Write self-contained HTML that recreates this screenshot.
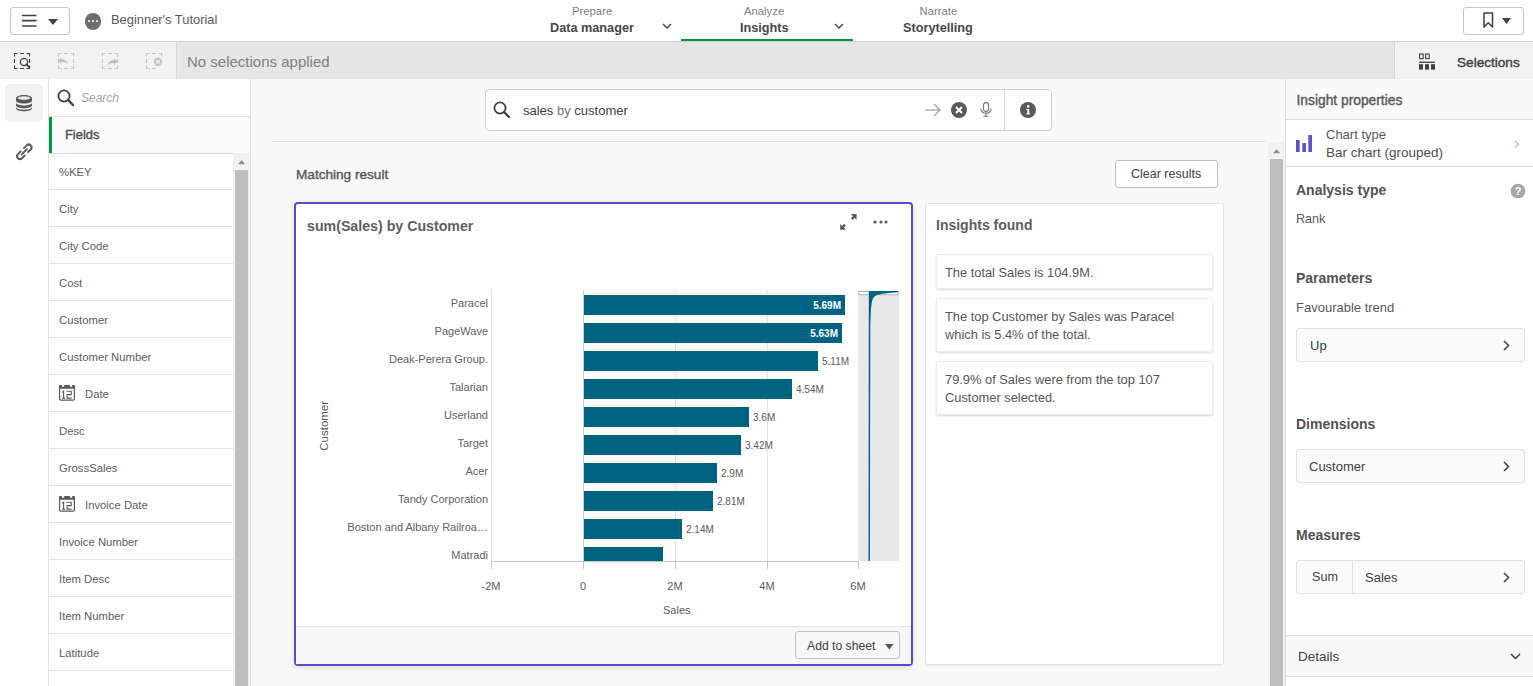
<!DOCTYPE html>
<html><head><meta charset="utf-8">
<style>
*{box-sizing:border-box;margin:0;padding:0}
html,body{width:1533px;height:686px;overflow:hidden;background:#fff;font-family:"Liberation Sans",sans-serif;color:#404040}
.a{position:absolute}
.t{position:absolute;white-space:nowrap;line-height:1}
svg{position:absolute;overflow:visible}
.fl{font-size:11.5px;color:#595959}
.b{font-weight:bold}
</style></head><body>
<div class="a" style="left:0px;top:0px;width:1533px;height:42px;background:#fff;border-bottom:1px solid #cfcfcf"></div>
<div class="a" style="left:10px;top:7px;width:60px;height:28px;border:1px solid #c4c4c4;border-radius:3px"></div>
<svg style="left:22px;top:13px" width="15" height="15"><path d="M0,2.5H14.5M0,7.7H14.5M0,13H14.5" stroke="#404040" stroke-width="1.7"/></svg>
<svg style="left:48px;top:19px" width="10" height="6"><path d="M0 0H10L5 6Z" fill="#404040"/></svg>
<div class="a" style="left:84.5px;top:13px;width:16.5px;height:16.5px;border-radius:50%;background:#6e6e6e"></div>
<div class="a" style="left:87.5px;top:19.8px;width:2.6px;height:2.6px;border-radius:50%;background:#fff"></div>
<div class="a" style="left:91.5px;top:19.8px;width:2.6px;height:2.6px;border-radius:50%;background:#fff"></div>
<div class="a" style="left:95.5px;top:19.8px;width:2.6px;height:2.6px;border-radius:50%;background:#fff"></div>
<div class="t" style="left:111px;top:14px;font-size:12.9px;color:#595959">Beginner's Tutorial</div>
<div class="t" style="left:572px;top:6px;font-size:11.3px;color:#808080">Prepare</div>
<div class="t" style="left:550px;top:22px;font-size:12.7px;font-weight:bold;color:#474747">Data manager</div>
<div class="t" style="left:744px;top:6px;font-size:11.3px;color:#808080">Analyze</div>
<div class="t" style="left:740px;top:22px;font-size:12.7px;font-weight:bold;color:#474747">Insights</div>
<div class="t" style="left:919.5px;top:6px;font-size:11.3px;color:#808080">Narrate</div>
<div class="t" style="left:903px;top:22px;font-size:12.7px;font-weight:bold;color:#474747">Storytelling</div>
<svg style="left:662px;top:22.5px" width="10" height="6"><path d="M1 1L5 5L9 1" fill="none" stroke="#404040" stroke-width="1.3"/></svg>
<svg style="left:834px;top:22.5px" width="10" height="6"><path d="M1 1L5 5L9 1" fill="none" stroke="#404040" stroke-width="1.3"/></svg>
<div class="a" style="left:681px;top:39px;width:172px;height:2px;background:#009845"></div>
<div class="a" style="left:1463px;top:7px;width:61px;height:28px;border:1px solid #c4c4c4;border-radius:3px"></div>
<svg style="left:1483px;top:12px" width="12" height="16"><path d="M1 1H9.5V15L5.25 10.8L1 15Z" fill="none" stroke="#404040" stroke-width="1.5" stroke-linejoin="round"/></svg>
<svg style="left:1502px;top:18px" width="10" height="6"><path d="M0 0H9L4.5 6Z" fill="#404040"/></svg>
<div class="a" style="left:0px;top:42px;width:176px;height:37px;background:#f2f2f2"></div>
<div class="a" style="left:176px;top:42px;width:1218px;height:37px;background:#e6e6e6;border-left:1px solid #d6d6d6"></div>
<div class="a" style="left:1394px;top:42px;width:139px;height:37px;background:#f2f2f2;border-left:1px solid #d6d6d6"></div>
<svg style="left:14px;top:53px" width="16" height="16"><path d="M0.5,3.5V0.5H3.5M6,0.5H10M12.5,0.5H15.5V3.5M0.5,6V10M0.5,12.5V15.5H3.5M6,15.5H10M15.5,6V10M12.5,15.5H15.5V12.5" fill="none" stroke="#404040" stroke-width="1.1"/></svg>
<svg style="left:58px;top:53px" width="16" height="16"><path d="M0.5,3.5V0.5H3.5M6,0.5H10M12.5,0.5H15.5V3.5M0.5,6V10M0.5,12.5V15.5H3.5M6,15.5H10M15.5,6V10M12.5,15.5H15.5V12.5" fill="none" stroke="#c4c4c4" stroke-width="1.1"/></svg>
<svg style="left:102px;top:53px" width="16" height="16"><path d="M0.5,3.5V0.5H3.5M6,0.5H10M12.5,0.5H15.5V3.5M0.5,6V10M0.5,12.5V15.5H3.5M6,15.5H10M15.5,6V10M12.5,15.5H15.5V12.5" fill="none" stroke="#c4c4c4" stroke-width="1.1"/></svg>
<svg style="left:146px;top:53px" width="16" height="16"><path d="M0.5,3.5V0.5H3.5M6,0.5H10M12.5,0.5H15.5V3.5M0.5,6V10M0.5,12.5V15.5H3.5M6,15.5H10" fill="none" stroke="#c4c4c4" stroke-width="1.1"/></svg>
<svg style="left:14px;top:53px" width="18" height="18"><circle cx="10" cy="8.9" r="3.6" fill="none" stroke="#404040" stroke-width="1.3"/><path d="M12.6 11.5L15.5 14.4" stroke="#404040" stroke-width="1.8" stroke-linecap="round"/></svg>
<svg style="left:58px;top:57px" width="12" height="9"><path d="M0,3.6 L3.4,0.5 V2.3 C6.5,2.3 9.2,3.8 10.2,7.4 C8.8,5.8 6.6,5 3.4,5 V6.9 Z" fill="#c0c0c0"/></svg>
<svg style="left:106px;top:58px" width="12" height="9"><path d="M11.5,3.6 L8.1,0.5 V2.3 C5,2.3 2.3,3.8 1.3,7.4 C2.7,5.8 4.9,5 8.1,5 V6.9 Z" fill="#c0c0c0"/></svg>
<svg style="left:153px;top:57px" width="10" height="10"><circle cx="5" cy="4.8" r="4.2" fill="#c4c4c4"/><path d="M3.2 3L6.8 6.6M6.8 3L3.2 6.6" stroke="#f2f2f2" stroke-width="1.3"/></svg>
<div class="t" style="left:187px;top:54px;font-size:15px;color:#808080">No selections applied</div>
<svg style="left:1419px;top:53px" width="17" height="17"><rect x="0.6" y="1" width="3.6" height="4.6" fill="none" stroke="#404040" stroke-width="1.1"/><rect x="6.6" y="1" width="3.6" height="4.6" fill="none" stroke="#404040" stroke-width="1.1"/><rect x="0" y="8.6" width="16" height="1.3" fill="#404040"/><rect x="0" y="11.2" width="4" height="5.4" fill="#404040"/><rect x="6" y="11.2" width="4" height="5.4" fill="#404040"/><rect x="12" y="11.2" width="4" height="5.4" fill="#404040"/></svg>
<div class="t" style="left:1457px;top:56px;font-size:13.6px;color:#404040;-webkit-text-stroke:0.4px #404040">Selections</div>
<div class="a" style="left:0px;top:79px;width:49px;height:607px;background:#fff;border-right:1px solid #e3e3e3"></div>
<div class="a" style="left:5px;top:84px;width:38px;height:38px;background:#f2f2f2;border-radius:5px"></div>
<svg style="left:16px;top:95px" width="17" height="17"><g fill="#595959">
<path d="M0,3.2 C0,1.4 3.6,0 8,0 S16,1.4 16,3.2 V5.6 C16,7.4 12.4,8.6 8,8.6 S0,7.4 0,5.6 Z"/>
<path d="M0,8.2 C0.8,9.6 4,10.4 8,10.4 S15.2,9.6 16,8.2 V10.2 C16,12 12.4,13.2 8,13.2 S0,12 0,10.2 Z"/>
<path d="M0,12.6 C0.8,14 4,14.8 8,14.8 S15.2,14 16,12.6 V13.2 C16,15 12.4,16.2 8,16.2 S0,15 0,13.2 Z"/>
</g><ellipse cx="8" cy="3" rx="6.2" ry="1.7" fill="#e8e8e8"/></svg>
<svg style="left:12px;top:139px" width="24" height="24"><g transform="translate(12.3,12.8) rotate(45) scale(0.86)" fill="none" stroke="#595959" stroke-width="2.3" stroke-linecap="round">
<path d="M-3.3,-2.8 V-7.2 A3.3,3.3 0 0 1 3.3,-7.2 V-2.8"/>
<path d="M-3.3,2.8 V7.2 A3.3,3.3 0 0 0 3.3,7.2 V2.8"/>
<path d="M0,-4.2 V4.2"/></g></svg>
<div class="a" style="left:49px;top:79px;width:202px;height:607px;background:#fff;border-right:1px solid #e0e0e0"></div>
<div class="a" style="left:49px;top:116px;width:201px;height:1px;background:#e3e3e3"></div>
<svg style="left:57px;top:89px" width="18" height="18"><circle cx="7" cy="7" r="5.6" fill="none" stroke="#404040" stroke-width="1.8"/><path d="M11 11L16 16" stroke="#404040" stroke-width="2.4" stroke-linecap="round"/></svg>
<div class="t" style="left:81px;top:92px;font-size:12px;font-style:italic;color:#a3a3a3">Search</div>
<div class="a" style="left:49px;top:117px;width:201px;height:37px;background:#fafafa;border-bottom:1px solid #d9d9d9"></div>
<div class="a" style="left:49px;top:117px;width:3px;height:36px;background:#009845"></div>
<div class="t" style="left:65px;top:128.5px;font-size:12.9px;color:#505050;-webkit-text-stroke:0.4px #505050">Fields</div>
<div class="a" style="left:49px;top:153px;width:184px;height:37px;border-bottom:1px solid #e6e6e6"></div>
<div class="t" style="left:59px;top:167px;font-size:11.3px;color:#5c5c5c">%KEY</div>
<div class="a" style="left:49px;top:190px;width:184px;height:37px;border-bottom:1px solid #e6e6e6"></div>
<div class="t" style="left:59px;top:204px;font-size:11.3px;color:#5c5c5c">City</div>
<div class="a" style="left:49px;top:227px;width:184px;height:37px;border-bottom:1px solid #e6e6e6"></div>
<div class="t" style="left:59px;top:241px;font-size:11.3px;color:#5c5c5c">City Code</div>
<div class="a" style="left:49px;top:264px;width:184px;height:37px;border-bottom:1px solid #e6e6e6"></div>
<div class="t" style="left:59px;top:278px;font-size:11.3px;color:#5c5c5c">Cost</div>
<div class="a" style="left:49px;top:301px;width:184px;height:37px;border-bottom:1px solid #e6e6e6"></div>
<div class="t" style="left:59px;top:315px;font-size:11.3px;color:#5c5c5c">Customer</div>
<div class="a" style="left:49px;top:338px;width:184px;height:37px;border-bottom:1px solid #e6e6e6"></div>
<div class="t" style="left:59px;top:352px;font-size:11.3px;color:#5c5c5c">Customer Number</div>
<div class="a" style="left:49px;top:375px;width:184px;height:37px;border-bottom:1px solid #e6e6e6"></div>
<svg style="left:59px;top:385px" width="17" height="17"><path d="M0.6,3 V14 Q0.6,15.2 1.8,15.2 H14.2 Q15.4,15.2 15.4,14 V3" fill="none" stroke="#595959" stroke-width="1.2"/><path d="M1,0 H2.9 V1.8 H5.2 V0 H10.9 V1.8 H13.2 V0 H15 Q16,0 16,1 V3.7 H0 V1 Q0,0 1,0 Z" fill="#595959"/><path d="M3.2,7.2 L4.6,6.3 V13.1 M3.1,13.1 H6 M7.5,6.3 H12.2 V9.6 H8.1 V13.1 H12.6" fill="none" stroke="#595959" stroke-width="1.1"/></svg>
<div class="t" style="left:85px;top:389px;font-size:11.3px;color:#5c5c5c">Date</div>
<div class="a" style="left:49px;top:412px;width:184px;height:37px;border-bottom:1px solid #e6e6e6"></div>
<div class="t" style="left:59px;top:426px;font-size:11.3px;color:#5c5c5c">Desc</div>
<div class="a" style="left:49px;top:449px;width:184px;height:37px;border-bottom:1px solid #e6e6e6"></div>
<div class="t" style="left:59px;top:463px;font-size:11.3px;color:#5c5c5c">GrossSales</div>
<div class="a" style="left:49px;top:486px;width:184px;height:37px;border-bottom:1px solid #e6e6e6"></div>
<svg style="left:59px;top:496px" width="17" height="17"><path d="M0.6,3 V14 Q0.6,15.2 1.8,15.2 H14.2 Q15.4,15.2 15.4,14 V3" fill="none" stroke="#595959" stroke-width="1.2"/><path d="M1,0 H2.9 V1.8 H5.2 V0 H10.9 V1.8 H13.2 V0 H15 Q16,0 16,1 V3.7 H0 V1 Q0,0 1,0 Z" fill="#595959"/><path d="M3.2,7.2 L4.6,6.3 V13.1 M3.1,13.1 H6 M7.5,6.3 H12.2 V9.6 H8.1 V13.1 H12.6" fill="none" stroke="#595959" stroke-width="1.1"/></svg>
<div class="t" style="left:85px;top:500px;font-size:11.3px;color:#5c5c5c">Invoice Date</div>
<div class="a" style="left:49px;top:523px;width:184px;height:37px;border-bottom:1px solid #e6e6e6"></div>
<div class="t" style="left:59px;top:537px;font-size:11.3px;color:#5c5c5c">Invoice Number</div>
<div class="a" style="left:49px;top:560px;width:184px;height:37px;border-bottom:1px solid #e6e6e6"></div>
<div class="t" style="left:59px;top:574px;font-size:11.3px;color:#5c5c5c">Item Desc</div>
<div class="a" style="left:49px;top:597px;width:184px;height:37px;border-bottom:1px solid #e6e6e6"></div>
<div class="t" style="left:59px;top:611px;font-size:11.3px;color:#5c5c5c">Item Number</div>
<div class="a" style="left:49px;top:634px;width:184px;height:37px;border-bottom:1px solid #e6e6e6"></div>
<div class="t" style="left:59px;top:648px;font-size:11.3px;color:#5c5c5c">Latitude</div>
<div class="a" style="left:49px;top:671px;width:184px;height:37px;border-bottom:1px solid #e6e6e6"></div>
<div class="t" style="left:59px;top:685px;font-size:11.3px;color:#5c5c5c">Longitude</div>
<div class="a" style="left:233px;top:153px;width:17px;height:533px;background:#f2f2f2"></div>
<svg style="left:238px;top:160px" width="8" height="5"><path d="M0 4.3L3.6 0L7.2 4.3Z" fill="#8f8f8f"/></svg>
<div class="a" style="left:235px;top:170px;width:13px;height:516px;background:#bdbdbd"></div>
<div class="a" style="left:251px;top:79px;width:1035px;height:607px;background:#f9f9f9"></div>
<div class="a" style="left:485px;top:89px;width:567px;height:42px;background:#fff;border:1px solid #cfcfcf;border-radius:4px"></div>
<div class="a" style="left:1004px;top:90px;width:1px;height:40px;background:#d9d9d9"></div>
<svg style="left:493px;top:101px" width="18" height="18"><circle cx="7" cy="7" r="5.6" fill="none" stroke="#404040" stroke-width="1.8"/><path d="M11 11L16 16" stroke="#404040" stroke-width="2.4" stroke-linecap="round"/></svg>
<div class="t" style="left:523px;top:104px;font-size:13px;color:#404040">sales <span style="color:#737373">by</span> customer</div>
<svg style="left:924px;top:102px" width="18" height="16"><path d="M1 8H16M10 2L16 8L10 14" fill="none" stroke="#b0b0b0" stroke-width="1.5"/></svg>
<svg style="left:951px;top:102px" width="16" height="16"><circle cx="8" cy="8" r="8" fill="#595959"/><path d="M5 5L11 11M11 5L5 11" stroke="#fff" stroke-width="2"/></svg>
<svg style="left:980px;top:102px" width="12" height="15"><rect x="3.5" y="0.6" width="5" height="9" rx="2.5" fill="none" stroke="#737373" stroke-width="1.1"/><path d="M1 6.5C1 9.5 3 11.2 6 11.2S11 9.5 11 6.5M6 11.2V14.2M3.5 14.3H8.5" fill="none" stroke="#737373" stroke-width="1.1"/></svg>
<svg style="left:1020px;top:102px" width="16" height="16"><circle cx="8" cy="8" r="8" fill="#595959"/><circle cx="8.2" cy="4.4" r="1.3" fill="#fff"/><path d="M6.3 7H9.2V11.6H10.2V12.6H6.3V11.6H7.3V8H6.3Z" fill="#fff"/></svg>
<div class="a" style="left:271px;top:141px;width:994px;height:1px;background:#e0e0e0"></div>
<div class="a" style="left:1268px;top:142px;width:17px;height:544px;background:#f2f2f2"></div>
<svg style="left:1273px;top:149px" width="8" height="5"><path d="M0 4.3L3.6 0L7.2 4.3Z" fill="#8f8f8f"/></svg>
<div class="a" style="left:1270px;top:159px;width:13px;height:527px;background:#bdbdbd"></div>
<div class="t" style="left:296px;top:167.5px;font-size:13.6px;color:#595959;-webkit-text-stroke:0.4px #595959">Matching result</div>
<div class="a" style="left:1115px;top:160px;width:103px;height:28px;background:#fff;border:1px solid #bfbfbf;border-radius:3px"></div>
<div class="t" style="left:1131px;top:168px;font-size:12.5px;color:#404040">Clear results</div>
<div class="a" style="left:294px;top:202px;width:619px;height:464px;background:#fff;border:2px solid #574cc6;border-radius:4px;box-shadow:0 2px 6px rgba(0,0,0,0.12)"></div>
<div class="a" style="left:296px;top:626px;width:615px;height:38px;background:#f7f7f7;border-top:1px solid #e3e3e3"></div>
<div class="a" style="left:795px;top:631px;width:105px;height:28px;background:#f7f7f7;border:1px solid #bfbfbf;border-radius:3px"></div>
<div class="t" style="left:807px;top:640px;font-size:12.2px;color:#404040">Add to sheet</div>
<svg style="left:885px;top:643.5px" width="9" height="6"><path d="M0 0H8.5L4.25 5.5Z" fill="#595959"/></svg>
<div class="t" style="left:307px;top:219px;font-size:14.2px;font-weight:bold;color:#5e5e5e">sum(Sales) by Customer</div>
<svg style="left:834px;top:208px" width="30" height="28"><g fill="#595959"><path d="M16.8,6 H22.6 V11.8 L20.7,9.9 L18.6,12 L16.9,10.3 L19,8.2 Z"/><path d="M12,21.8 H6.2 V16 L8.1,17.9 L10.2,15.8 L11.9,17.5 L9.8,19.6 Z"/></g></svg>
<svg style="left:873px;top:220px" width="4" height="4"><circle cx="2" cy="2" r="1.6" fill="#595959"/></svg>
<svg style="left:878.5px;top:220px" width="4" height="4"><circle cx="2" cy="2" r="1.6" fill="#595959"/></svg>
<svg style="left:884px;top:220px" width="4" height="4"><circle cx="2" cy="2" r="1.6" fill="#595959"/></svg>
<div class="t" style="left:302px;top:422px;font-size:11.5px;color:#595959;transform:rotate(-90deg);transform-origin:center;width:46px;text-align:center">Customer</div>
<div class="a" style="left:491px;top:290px;width:1px;height:271px;background:#e3e3e3"></div>
<div class="a" style="left:675px;top:290px;width:1px;height:271px;background:#e3e3e3"></div>
<div class="a" style="left:767px;top:290px;width:1px;height:271px;background:#e3e3e3"></div>
<div class="a" style="left:858px;top:290px;width:1px;height:271px;background:#e3e3e3"></div>
<div class="a" style="left:583px;top:290px;width:1px;height:271px;background:#cfcfcf"></div>
<div class="a" style="left:491px;top:561px;width:368px;height:1px;background:#c4c4c4"></div>
<div class="a" style="left:491px;top:561px;width:1px;height:8px;background:#c4c4c4"></div>
<div class="a" style="left:583px;top:561px;width:1px;height:8px;background:#c4c4c4"></div>
<div class="a" style="left:675px;top:561px;width:1px;height:8px;background:#c4c4c4"></div>
<div class="a" style="left:767px;top:561px;width:1px;height:8px;background:#c4c4c4"></div>
<div class="a" style="left:858px;top:561px;width:1px;height:8px;background:#c4c4c4"></div>
<div class="t" style="left:461px;top:581px;width:60px;text-align:center;font-size:11px;color:#595959">-2M</div>
<div class="t" style="left:553px;top:581px;width:60px;text-align:center;font-size:11px;color:#595959">0</div>
<div class="t" style="left:645px;top:581px;width:60px;text-align:center;font-size:11px;color:#595959">2M</div>
<div class="t" style="left:737px;top:581px;width:60px;text-align:center;font-size:11px;color:#595959">4M</div>
<div class="t" style="left:828px;top:581px;width:60px;text-align:center;font-size:11px;color:#595959">6M</div>
<div class="t" style="left:663px;top:605px;font-size:11px;color:#595959">Sales</div>
<div class="a" style="left:584px;top:295px;width:261px;height:20px;background:#006381"></div>
<div class="t" style="left:288px;top:298px;width:200px;text-align:right;font-size:11px;color:#616161">Paracel</div>
<div class="t" style="left:641px;top:301px;width:200px;text-align:right;font-size:10px;font-weight:bold;color:#fff">5.69M</div>
<div class="a" style="left:584px;top:323px;width:258px;height:20px;background:#006381"></div>
<div class="t" style="left:288px;top:326px;width:200px;text-align:right;font-size:11px;color:#616161">PageWave</div>
<div class="t" style="left:638px;top:329px;width:200px;text-align:right;font-size:10px;font-weight:bold;color:#fff">5.63M</div>
<div class="a" style="left:584px;top:351px;width:234px;height:20px;background:#006381"></div>
<div class="t" style="left:288px;top:354px;width:200px;text-align:right;font-size:11px;color:#616161">Deak-Perera Group.</div>
<div class="t" style="left:822px;top:357px;font-size:10px;color:#595959">5.11M</div>
<div class="a" style="left:584px;top:379px;width:208px;height:20px;background:#006381"></div>
<div class="t" style="left:288px;top:382px;width:200px;text-align:right;font-size:11px;color:#616161">Talarian</div>
<div class="t" style="left:796px;top:385px;font-size:10px;color:#595959">4.54M</div>
<div class="a" style="left:584px;top:407px;width:165px;height:20px;background:#006381"></div>
<div class="t" style="left:288px;top:410px;width:200px;text-align:right;font-size:11px;color:#616161">Userland</div>
<div class="t" style="left:753px;top:413px;font-size:10px;color:#595959">3.6M</div>
<div class="a" style="left:584px;top:435px;width:157px;height:20px;background:#006381"></div>
<div class="t" style="left:288px;top:438px;width:200px;text-align:right;font-size:11px;color:#616161">Target</div>
<div class="t" style="left:745px;top:441px;font-size:10px;color:#595959">3.42M</div>
<div class="a" style="left:584px;top:463px;width:133px;height:20px;background:#006381"></div>
<div class="t" style="left:288px;top:466px;width:200px;text-align:right;font-size:11px;color:#616161">Acer</div>
<div class="t" style="left:721px;top:469px;font-size:10px;color:#595959">2.9M</div>
<div class="a" style="left:584px;top:491px;width:129px;height:20px;background:#006381"></div>
<div class="t" style="left:288px;top:494px;width:200px;text-align:right;font-size:11px;color:#616161">Tandy Corporation</div>
<div class="t" style="left:717px;top:497px;font-size:10px;color:#595959">2.81M</div>
<div class="a" style="left:584px;top:519px;width:98px;height:20px;background:#006381"></div>
<div class="t" style="left:288px;top:522px;width:200px;text-align:right;font-size:11px;color:#616161">Boston and Albany Railroa…</div>
<div class="t" style="left:686px;top:525px;font-size:10px;color:#595959">2.14M</div>
<div class="a" style="left:584px;top:547px;width:79px;height:14px;background:#006381"></div>
<div class="t" style="left:288px;top:550px;width:200px;text-align:right;font-size:11px;color:#616161">Matradi</div>
<div class="a" style="left:858px;top:291px;width:41px;height:270px;background:#e8e8e8"></div>
<svg style="left:858px;top:291px" width="41" height="270"><rect x="0.8" y="0.5" width="39.4" height="3.2" fill="#fff" stroke="#b5b5b5" stroke-width="1"/><path d="M10.8,0 H40 V1.3 C32,2 22,2.4 17,5 C13.6,7.5 12.7,14 12.3,40 L11.9,270 H10.5 Z" fill="#006381"/></svg>
<div class="a" style="left:925px;top:203px;width:299px;height:462px;background:#fff;border:1px solid #e3e3e3;border-radius:3px;box-shadow:0 1px 2px rgba(0,0,0,0.06)"></div>
<div class="t" style="left:936px;top:218px;font-size:14px;font-weight:bold;color:#5e5e5e">Insights found</div>
<div class="a" style="left:936px;top:254px;width:277px;height:35px;background:#fff;border:1px solid #ebebeb;border-radius:2px;box-shadow:0 1px 2px rgba(0,0,0,0.15)"></div>
<div class="t" style="left:945px;top:267px;font-size:12.85px;color:#555555">The total Sales is 104.9M.</div>
<div class="a" style="left:936px;top:298px;width:277px;height:54px;background:#fff;border:1px solid #ebebeb;border-radius:2px;box-shadow:0 1px 2px rgba(0,0,0,0.15)"></div>
<div class="t" style="left:945px;top:311px;font-size:12.85px;color:#555555">The top Customer by Sales was Paracel</div>
<div class="t" style="left:945px;top:329px;font-size:12.85px;color:#555555">which is 5.4% of the total.</div>
<div class="a" style="left:936px;top:361px;width:277px;height:54px;background:#fff;border:1px solid #ebebeb;border-radius:2px;box-shadow:0 1px 2px rgba(0,0,0,0.15)"></div>
<div class="t" style="left:945px;top:374px;font-size:12.85px;color:#555555">79.9% of Sales were from the top 107</div>
<div class="t" style="left:945px;top:392px;font-size:12.85px;color:#555555">Customer selected.</div>
<div class="a" style="left:1285px;top:79px;width:248px;height:607px;background:#fff;border-left:1px solid #dcdcdc"></div>
<div class="a" style="left:1286px;top:79px;width:247px;height:41px;background:#f9f9f9;border-bottom:1px solid #dcdcdc"></div>
<div class="t" style="left:1296.5px;top:93.5px;font-size:13.8px;color:#5a5a5a;-webkit-text-stroke:0.4px #5a5a5a">Insight properties</div>
<div class="a" style="left:1286px;top:120px;width:247px;height:47px;background:#fff;border-bottom:1px solid #dcdcdc"></div>
<svg style="left:1296px;top:135px" width="17" height="18"><g fill="#5b54c6"><rect x="0" y="5" width="3.7" height="12" rx="0.5"/><rect x="6.3" y="8" width="3.7" height="9" rx="0.5"/><rect x="12.3" y="0" width="3.7" height="17" rx="0.5"/></g></svg>
<div class="t" style="left:1326px;top:128px;font-size:13px;color:#595959">Chart type</div>
<div class="t" style="left:1326px;top:146px;font-size:13.5px;color:#4d4d4d">Bar chart (grouped)</div>
<svg style="left:1514px;top:140px" width="7" height="9"><path d="M1 1L4.5 4.3L1 7.6" fill="none" stroke="#b3b3e6" stroke-width="1.2"/></svg>
<div class="t" style="left:1296px;top:183px;font-size:14px;font-weight:bold;color:#525252">Analysis type</div>
<svg style="left:1510px;top:183px" width="16" height="16"><circle cx="8" cy="8" r="7.3" fill="#a6a6a6"/><text x="8" y="12.2" font-size="11" font-weight="bold" text-anchor="middle" fill="#fff" font-family="Liberation Sans">?</text></svg>
<div class="t" style="left:1296px;top:213px;font-size:12.6px;color:#595959">Rank</div>
<div class="t" style="left:1296px;top:271px;font-size:14px;font-weight:bold;color:#525252">Parameters</div>
<div class="t" style="left:1296px;top:301px;font-size:13px;color:#595959">Favourable trend</div>
<div class="a" style="left:1296px;top:328px;width:229px;height:34px;background:#fafafa;border:1px solid #e0e0e0;border-radius:3px"></div>
<div class="t" style="left:1310px;top:339px;font-size:13px;color:#404040">Up</div>
<svg style="left:1503px;top:340px" width="7" height="11"><path d="M1 1L5.5 5.5L1 10" fill="none" stroke="#404040" stroke-width="1.5"/></svg>
<div class="t" style="left:1296px;top:417px;font-size:14px;font-weight:bold;color:#525252">Dimensions</div>
<div class="a" style="left:1296px;top:449px;width:229px;height:34px;background:#fafafa;border:1px solid #e0e0e0;border-radius:3px"></div>
<div class="t" style="left:1309px;top:460px;font-size:13px;color:#404040">Customer</div>
<svg style="left:1503px;top:461px" width="7" height="11"><path d="M1 1L5.5 5.5L1 10" fill="none" stroke="#404040" stroke-width="1.5"/></svg>
<div class="t" style="left:1296px;top:528px;font-size:14px;font-weight:bold;color:#525252">Measures</div>
<div class="a" style="left:1296px;top:560px;width:229px;height:34px;background:#fafafa;border:1px solid #e0e0e0;border-radius:3px"></div>
<div class="a" style="left:1352px;top:561px;width:1px;height:32px;background:#e0e0e0"></div>
<div class="t" style="left:1312px;top:571px;font-size:12.6px;color:#404040">Sum</div>
<div class="t" style="left:1365px;top:571px;font-size:13px;color:#404040">Sales</div>
<svg style="left:1503px;top:572px" width="7" height="11"><path d="M1 1L5.5 5.5L1 10" fill="none" stroke="#404040" stroke-width="1.5"/></svg>
<div class="a" style="left:1286px;top:635px;width:247px;height:42px;background:#f9f9f9;border-top:1px solid #dcdcdc;border-bottom:1px solid #dcdcdc"></div>
<div class="t" style="left:1298px;top:650px;font-size:13.5px;color:#404040">Details</div>
<svg style="left:1510px;top:653px" width="11" height="7"><path d="M1 1L5.5 5.5L10 1" fill="none" stroke="#404040" stroke-width="1.5"/></svg>
</body></html>
